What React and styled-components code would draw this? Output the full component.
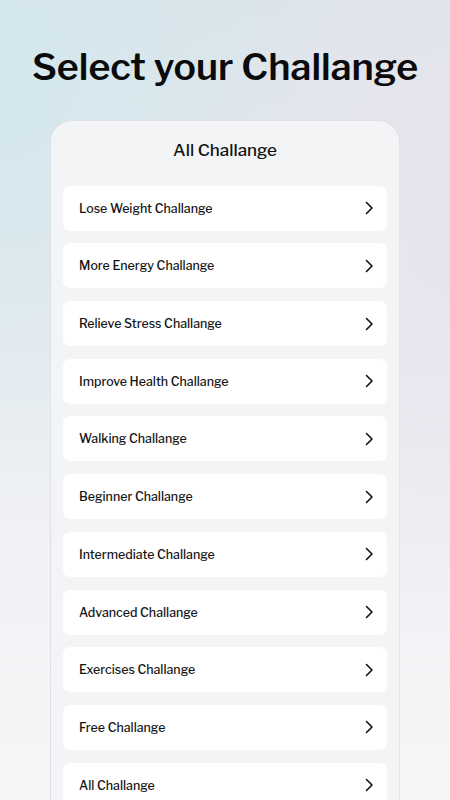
import styled, { createGlobalStyle } from "styled-components";

const CHALLENGES = [
  "Lose Weight Challange",
  "More Energy Challange",
  "Relieve Stress Challange",
  "Improve Health Challange",
  "Walking Challange",
  "Beginner Challange",
  "Intermediate Challange",
  "Advanced Challange",
  "Exercises Challange",
  "Free Challange",
  "All Challange",
];

const GlobalStyle = createGlobalStyle`
  html, body {
    margin: 0;
    padding: 0;
  }
  body {
    font-family: "Libre Franklin", "Liberation Sans", Arial, sans-serif;
    color: #111;
  }
`;

const Page = styled.div`
  width: 450px;
  height: 800px;
  overflow: hidden;
  background:
    radial-gradient(ellipse 320px 420px at 0% 10%, #d3e8ee 0%, rgba(211, 232, 238, 0) 100%),
    radial-gradient(ellipse 300px 400px at 100% 30%, #e8e4ee 0%, rgba(232, 228, 238, 0) 100%),
    linear-gradient(180deg, #dbe4ea 0%, #e8ebef 35%, #f1f2f5 70%, #f6f6f8 100%);
  display: flex;
  flex-direction: column;
  align-items: center;
`;

const Heading = styled.h1`
  margin: 43px 0 0;
  font-size: 37.5px;
  font-weight: 600;
  line-height: 48px;
  color: #0b0b0c;
`;

const Card = styled.div`
  margin-top: 29px;
  width: 350px;
  box-sizing: border-box;
  background: #f3f4f6;
  border: 1px solid #dfe1e6;
  border-radius: 22px;
  padding: 0 12px 20px;
  display: flex;
  flex-direction: column;
  gap: 12.7px;
`;

const CardTitle = styled.div`
  font-size: 17px;
  font-weight: 500;
  text-align: center;
  height: 52px;
  line-height: 58px;
  color: #111;
`;

const Row = styled.div`
  height: 45px;
  background: #fff;
  border-radius: 7px;
  display: flex;
  align-items: center;
  justify-content: space-between;
  padding: 0 10px 0 16px;
`;

const Label = styled.span`
  font-size: 12.4px;
  font-weight: 500;
  color: #141414;
`;

const Chevron = () => (
  <svg width="16" height="16" viewBox="0 0 16 16" fill="none">
    <path d="M5.5 2.5L11 8L5.5 13.5" stroke="#111" strokeWidth="1.6" strokeLinecap="round" strokeLinejoin="round" />
  </svg>
);

export default function App() {
  return (
    <>
      <GlobalStyle />
      <Page>
        <Heading>Select your Challange</Heading>
        <Card>
          <CardTitle>All Challange</CardTitle>
          {CHALLENGES.map((name) => (
            <Row key={name}>
              <Label>{name}</Label>
              <Chevron />
            </Row>
          ))}
        </Card>
      </Page>
    </>
  );
}
